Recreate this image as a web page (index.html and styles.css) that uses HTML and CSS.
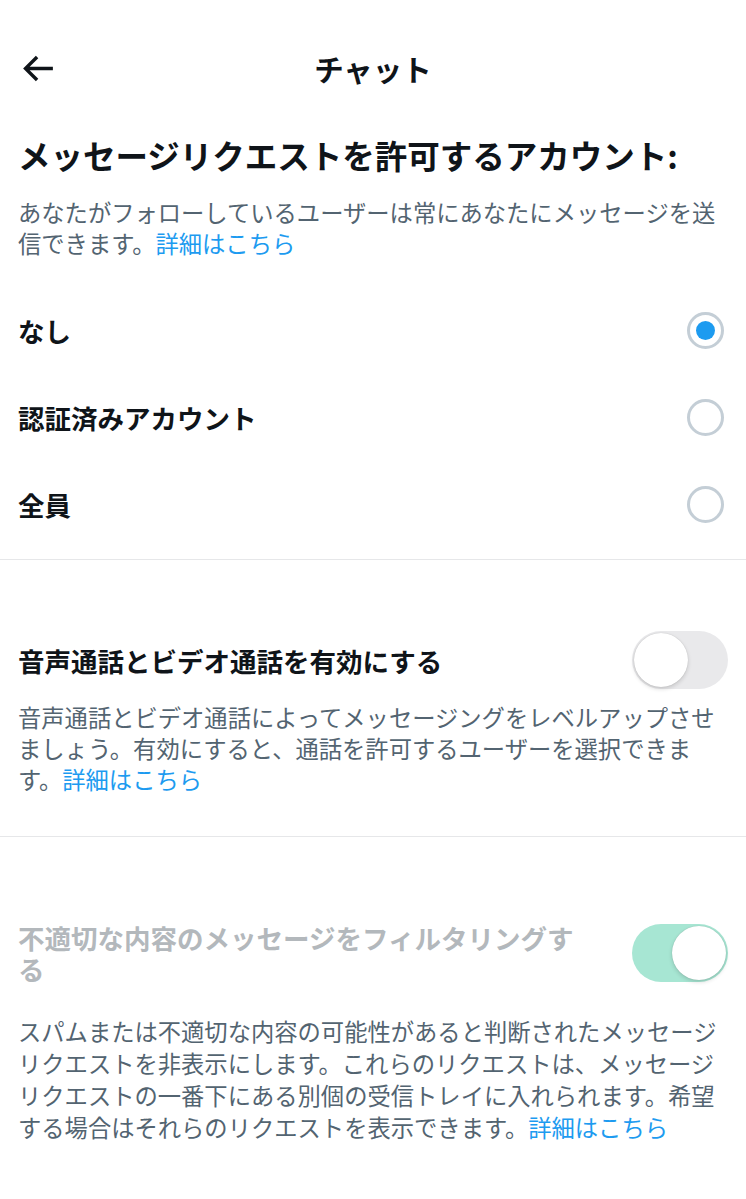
FILE: index.html
```html
<!DOCTYPE html>
<html lang="ja">
    <head>
        <meta charset="UTF-8">
        <meta name="viewport" content="width=device-width, initial-scale=1.0">
        <title>チャット</title>
        <link rel="stylesheet" href="styles.css">
    </head>
    <body>
        <div class="page">
            <header class="topBar">
                <span class="back">
                    <svg viewBox="0 0 24 24" width="41" height="41"><path d="M7.414 13l5.043 5.04-1.414 1.42L3.586 12l7.457-7.46 1.414 1.42L7.414 11H21v2H7.414z"/></svg>
                </span>
                <span class="pageTitle">チャット</span>
                <span></span>
            </header>

            <section class="section requests">
                <h2 class="heading">メッセージリクエストを許可するアカウント:</h2>
                <p class="desc">あなたがフォローしているユーザーは常にあなたにメッセージを送信できます。<a class="more">詳細はこちら</a></p>
                <ul class="options">
                    <li class="option">
                        <span class="optionLabel">なし</span>
                        <span class="radio checked"></span>
                    </li>
                    <li class="option">
                        <span class="optionLabel">認証済みアカウント</span>
                        <span class="radio"></span>
                    </li>
                    <li class="option">
                        <span class="optionLabel">全員</span>
                        <span class="radio"></span>
                    </li>
                </ul>
            </section>

            <section class="section calls">
                <div class="settingRow">
                    <span class="settingTitle">音声通話とビデオ通話を有効にする</span>
                    <span class="toggle"><span class="knob"></span></span>
                </div>
                <p class="desc">音声通話とビデオ通話によってメッセージングをレベルアップさせましょう。有効にすると、通話を許可するユーザーを選択できます。<a class="more">詳細はこちら</a></p>
            </section>

            <section class="section filter">
                <div class="settingRow">
                    <span class="settingTitle disabled">不適切な内容のメッセージをフィルタリングする</span>
                    <span class="toggle on"><span class="knob"></span></span>
                </div>
                <p class="desc">スパムまたは不適切な内容の可能性があると判断されたメッセージリクエストを非表示にします。これらのリクエストは、メッセージリクエストの一番下にある別個の受信トレイに入れられます。希望する場合はそれらのリクエストを表示できます。<a class="more">詳細はこちら</a></p>
            </section>
        </div>
    </body>
</html>
```

FILE: styles.css
```css
body {
    margin: 0;
    background: #fff;
    font-family: "Noto Sans CJK JP", "Noto Sans", sans-serif;
    color: #0f1419;
}
.page {
    width: 746px;
}
.topBar {
    height: 136px;
    display: grid;
    grid-template-columns: 1fr auto 1fr;
    align-items: center;
    padding-left: 17px;
    padding-right: 17px;
}
.back svg {
    display: block;
    fill: #0f1419;
}
.pageTitle {
    font-size: 29.5px;
    font-weight: 700;
    line-height: 40px;
}
.section {
    padding: 0 18px;
}
.requests {
    padding-bottom: 11px;
    border-bottom: 1px solid #e6e7e9;
}
.heading {
    margin: 0;
    font-size: 32.5px;
    line-height: 38px;
    font-weight: 700;
}
.desc {
    margin: 0;
    font-size: 23.3px;
    line-height: 31.5px;
    color: #536471;
}
.requests .desc {
    margin-top: 23px;
    line-height: 30.5px;
}
.more {
    display: inline-block;
    color: #1d9bf0;
}
.options {
    list-style: none;
    margin: 29px 0 0;
    padding: 0;
}
.option {
    height: 87px;
    display: flex;
    align-items: center;
    justify-content: space-between;
    padding-right: 4px;
}
.optionLabel {
    font-size: 26.5px;
    font-weight: 700;
}
.radio {
    width: 37px;
    height: 37px;
    box-sizing: border-box;
    border: 3px solid #c4ced6;
    border-radius: 50%;
    display: flex;
    align-items: center;
    justify-content: center;
}
.radio.checked::after {
    content: "";
    width: 19px;
    height: 19px;
    border-radius: 50%;
    background: #1d9bf0;
}
.calls {
    padding-top: 71px;
    padding-bottom: 41px;
    border-bottom: 1px solid #e6e7e9;
}
.filter {
    padding-top: 85px;
}
.settingRow {
    display: flex;
    align-items: center;
    justify-content: space-between;
    gap: 40px;
}
.settingTitle {
    max-width: 570px;
    font-size: 26.5px;
    line-height: 31px;
    font-weight: 700;
}
.settingTitle.disabled {
    color: #b3b8bc;
}
.calls .desc {
    margin-top: 13px;
    line-height: 31px;
}
.filter .desc {
    margin-top: 31px;
    line-height: 32px;
}
.toggle {
    flex-shrink: 0;
    width: 96px;
    height: 58px;
    box-sizing: border-box;
    padding: 2px;
    border-radius: 29px;
    background: #e9e9eb;
    display: flex;
    justify-content: flex-start;
}
.toggle.on {
    background: #a7e6d3;
    justify-content: flex-end;
}
.knob {
    width: 54px;
    height: 54px;
    border-radius: 50%;
    background: #fff;
    box-shadow: 0 2px 4px rgba(0, 0, 0, 0.15), 0 0 1px rgba(0, 0, 0, 0.2);
}
```
